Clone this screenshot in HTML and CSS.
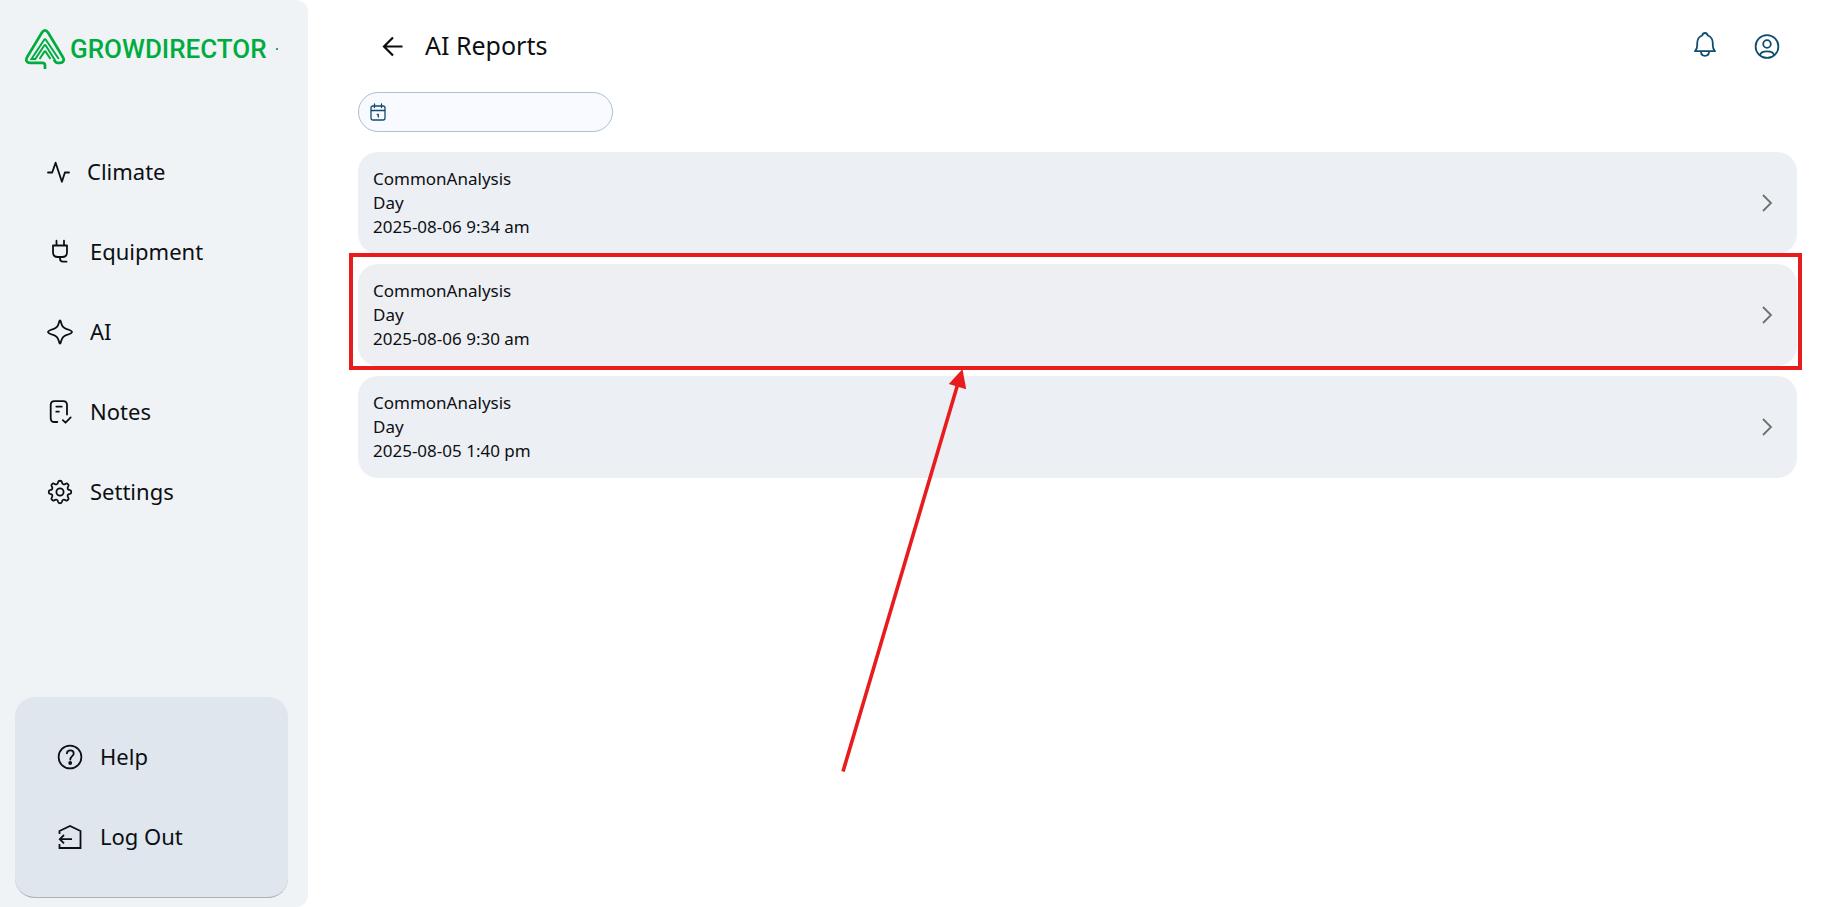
FILE: index.html
```html
<!DOCTYPE html>
<html lang="en">
<head>
<meta charset="utf-8">
<title>AI Reports</title>
<link rel="stylesheet" href="styles.css">
</head>
<body>
<div class="app">
  <aside class="sidebar">
    <a class="logo" href="#">
      <svg class="logo-mark" width="40" height="42" viewBox="0 0 40 42" fill="none" stroke="#00ac3e">
        <path stroke-width="2.700" d="M20 41V37.500q0-2.700-2.700-2.700H5C1.500 34.800.400 31.800 2.200 29L16.800 4.700Q20-.100 23.200 4.700L37.800 29C39.600 31.800 38.500 34.800 35 34.800H32.500Q31 34.800 30.200 33.500L29 31.600"/>
        <path stroke-width="2" d="M11 31H6.500L19 12Q20 10.600 21 12L33.800 31M10.300 31 19.100 17.700Q20 16.400 20.900 17.700L29.800 32M14.600 31 19.200 23.900Q20 22.700 20.800 23.900L25.500 31"/>
      </svg>
      <span class="logo-name">GROWDIRECTOR</span>
      <span class="logo-dot"></span>
    </a>
    <nav class="nav">
      <a class="nav-item nav-item-tight" href="#">
        <svg class="icon" width="24" height="24" viewBox="0 0 24 24"><path d="M1 12.500h4.200L8.600 2.700l6.300 19.100 3-9.300H22"/></svg>
        <span class="nav-label">Climate</span>
      </a>
      <a class="nav-item" href="#">
        <svg class="icon" width="26" height="26" viewBox="0 0 26 26"><path d="M6 6.500h14v6.500c0 3-1.800 5-4.500 5h-5C7.800 18 6 16 6 13zM9.500 6.500V1.700M17 6.500V1.700M13 18v1.500c0 2 1 3.200 3 3.200h3.500"/></svg>
        <span class="nav-label">Equipment</span>
      </a>
      <a class="nav-item" href="#">
        <svg class="icon" width="26" height="26" viewBox="0 0 26 26"><path d="M13 1.300c.700 0 .700 1 1 2.100 1.200 4.200 2.200 5.500 6.500 6.900 2.500.900 4.500 1.500 4.500 2.700s-2 1.800-4.500 2.700c-4.300 1.400-5.300 2.700-6.500 6.900-.300 1.100-.300 2.100-1 2.100s-.700-1-1-2.100c-1.200-4.200-2.200-5.500-6.500-6.900C3 14.800 1 14.200 1 13s2-1.800 4.500-2.700c4.300-1.400 5.300-2.700 6.500-6.900.300-1.100.300-2.100 1-2.100z"/></svg>
        <span class="nav-label">AI</span>
      </a>
      <a class="nav-item" href="#">
        <svg class="icon" width="26" height="26" viewBox="0 0 26 26"><path d="M10.300 23H7.500C5 23 3.700 21.700 3.700 19.200V6C3.700 3.500 5 2.200 7.500 2.200h8.700C18.700 2.200 20 3.500 20 6v9.500M9.300 7.600h5.500M9.300 12.700h2.500M15.800 21.200l2.700 2.500 5.200-5.300"/></svg>
        <span class="nav-label">Notes</span>
      </a>
      <a class="nav-item" href="#">
        <svg class="icon" width="26" height="26" viewBox="0 0 26 26"><circle cx="13" cy="13" r="3.600"/><path d="M11.100 3.100C11.400 1.300 14.600 1.300 14.900 3.100C15.200 5.400 16.800 6.100 18.700 4.700C20.200 3.600 22.400 5.800 21.300 7.300C19.900 9.200 20.600 10.800 22.900 11.100C24.700 11.400 24.700 14.600 22.900 14.900C20.600 15.200 19.900 16.800 21.300 18.700C22.400 20.200 20.200 22.400 18.700 21.300C16.800 19.900 15.200 20.600 14.900 22.900C14.600 24.700 11.400 24.700 11.100 22.900C10.800 20.600 9.200 19.900 7.300 21.300C5.800 22.400 3.600 20.200 4.700 18.700C6.100 16.800 5.400 15.200 3.100 14.900C1.300 14.600 1.300 11.400 3.100 11.100C5.400 10.800 6.100 9.200 4.700 7.300C3.600 5.800 5.800 3.600 7.300 4.700C9.200 6.100 10.800 5.400 11.100 3.100Z"/></svg>
        <span class="nav-label">Settings</span>
      </a>
    </nav>
    <div class="support">
      <a class="nav-item" href="#">
        <svg class="icon" width="26" height="26" viewBox="0 0 26 26"><circle cx="13" cy="13" r="11.400"/><path d="M9.900 9.300c.2-1.800 1.500-2.900 3.400-2.900 2 0 3.400 1.200 3.400 3 0 2.600-3.400 3-3.400 6.200"/><circle class="solid" cx="13.200" cy="19" r="1"/></svg>
        <span class="nav-label">Help</span>
      </a>
      <a class="nav-item" href="#">
        <svg class="icon icon-square" width="26" height="26" viewBox="0 0 26 26"><path d="M2.500 10V7L13 2l10.500 5v17h-21v-4M15 15.200H3M7 11l-4.200 4.200L7 19.400"/></svg>
        <span class="nav-label">Log Out</span>
      </a>
    </div>
  </aside>

  <main class="main">
    <header class="topbar">
      <button class="icon-button" type="button" aria-label="Back">
        <svg class="icon back" width="24" height="24" viewBox="0 0 24 24"><path d="M21.500 12.500H3M12 3.500l-9 9 9 9"/></svg>
      </button>
      <h1 class="title">AI Reports</h1>
      <div class="actions">
        <button class="icon-button" type="button" aria-label="Notifications">
          <svg class="icon accent" width="24" height="28" viewBox="0 0 24 28"><path d="M2 19.200c1.700-1.500 2.200-3 2.200-5.700v-2.300c0-3.700 2-6.500 5-7.700C9.600 2 10.500 1 12 1s2.400 1 2.800 2.500c3 1.200 5 4 5 7.700v2.300c0 2.700.500 4.200 2.200 5.700zM8 19.500c0 2.600 1.500 4.300 4 4.300s4-1.700 4-4.300"/></svg>
        </button>
        <button class="icon-button" type="button" aria-label="Account">
          <svg class="icon accent" width="26" height="26" viewBox="0 0 26 26"><circle cx="13" cy="13.500" r="11.400"/><circle cx="13" cy="11" r="3.800"/><path d="M6 22c.500-2.500 3-3.700 7-3.700s6.500 1.200 7 3.700"/></svg>
        </button>
      </div>
    </header>

    <label class="date-field">
      <svg class="icon calendar" width="16" height="18" viewBox="0 0 16 18"><path d="M3 3h10c1.300 0 2 .700 2 2v10c0 1.300-.700 2-2 2H3c-1.300 0-2-.700-2-2V5c0-1.300.700-2 2-2zM1 7.500h14M4.500 1v3.500M11.500 1v3.500M7.300 11.500h1v2.500"/></svg>
      <input class="date-input" type="text" aria-label="Date">
    </label>

    <ul class="reports">
      <li class="report">
        <a class="report-link" href="#">
          <span class="report-text"><span>CommonAnalysis</span><span>Day</span><span>2025-08-06 9:34 am</span></span>
          <svg class="chevron" width="10" height="18" viewBox="0 0 10 18"><path d="M1 1l8 8-8 8"/></svg>
        </a>
      </li>
      <li class="report report-marked">
        <a class="report-link" href="#">
          <span class="report-text"><span>CommonAnalysis</span><span>Day</span><span>2025-08-06 9:30 am</span></span>
          <svg class="chevron" width="10" height="18" viewBox="0 0 10 18"><path d="M1 1l8 8-8 8"/></svg>
        </a>
        <span class="marker"></span>
        <svg class="pointer" width="126" height="404" viewBox="0 0 126 404"><path d="M2 402.500 116.500 16" fill="none" stroke="#e81c1c" stroke-width="3.600"/><path d="M121.500 0 125.200 20.200 107.800 15z" fill="#e81c1c"/></svg>
      </li>
      <li class="report">
        <a class="report-link" href="#">
          <span class="report-text"><span>CommonAnalysis</span><span>Day</span><span>2025-08-05 1:40 pm</span></span>
          <svg class="chevron" width="10" height="18" viewBox="0 0 10 18"><path d="M1 1l8 8-8 8"/></svg>
        </a>
      </li>
    </ul>
  </main>
</div>
</body>
</html>
```
FILE: styles.css
```css
* {
  box-sizing: border-box;
}

body {
  margin: 0;
  background: #fff;
  color: #0c0f12;
  font-family: "Noto Sans", sans-serif;
}

a {
  color: inherit;
  text-decoration: none;
}

.app {
  display: flex;
  min-height: 100vh;
}

.sidebar {
  display: flex;
  flex-direction: column;
  flex: none;
  width: 308px;
  padding: 28px 20px 9px 15px;
  background: #eff3f6;
  border-radius: 0 12px 12px 0;
}

.logo {
  display: flex;
  align-items: center;
  gap: 5px;
  height: 42px;
  padding-left: 10px;
}

.logo-name {
  color: #00ac3e;
  font: 500 26px/40px Roboto, sans-serif;
}

.logo-dot {
  width: 2px;
  height: 2px;
  margin-left: 4px;
  background: #2f9d86;
}

.nav {
  padding: 62px 0 0 32px;
}

.nav-item {
  display: flex;
  align-items: center;
  gap: 17px;
  height: 80px;
  font-size: 22px;
  line-height: 32px;
}

.nav-item-tight {
  gap: 16px;
}

.nav-label {
  padding-bottom: 2px;
}

.support {
  margin-top: auto;
  padding: 20px 0 20px 42px;
  background: #dfe6ed;
  border-bottom: 1px solid #aab2ba;
  border-radius: 20px;
}

.icon {
  flex: none;
  fill: none;
  stroke: #0c0f12;
  stroke-width: 1.8;
  stroke-linecap: round;
  stroke-linejoin: round;
}

.icon-square {
  stroke-linecap: butt;
  stroke-linejoin: miter;
}

.solid {
  fill: #0c0f12;
}

.back {
  stroke-width: 2.2;
  stroke-linecap: butt;
  stroke-linejoin: miter;
}

.accent {
  stroke: #0f4c6e;
}

.main {
  flex: 1;
  min-width: 0;
  padding: 20px 43px 20px 50px;
}

.topbar {
  display: flex;
  align-items: center;
  height: 52px;
  padding: 0 17px 0 23px;
}

.icon-button {
  display: flex;
  padding: 0;
  border: 0;
  background: none;
}

.title {
  margin: 0 0 0 20px;
  padding-bottom: 2px;
  font-size: 25px;
  font-weight: 400;
  line-height: 34px;
}

.actions {
  display: flex;
  align-items: center;
  gap: 37px;
  margin-left: auto;
}

.date-field {
  display: flex;
  align-items: center;
  gap: 10px;
  width: 255px;
  height: 40px;
  margin-top: 20px;
  padding: 0 11px;
  background: #f8faff;
  border: 1px solid #adbfd0;
  border-radius: 20px;
}

.calendar {
  stroke: #0f4c6e;
  stroke-width: 1.3;
}

.date-input {
  flex: 1;
  min-width: 0;
  border: 0;
  outline: 0;
  background: none;
  font: inherit;
}

.reports {
  display: flex;
  flex-direction: column;
  gap: 10px;
  margin: 20px 0 0;
  padding: 0;
  list-style: none;
}

.report {
  position: relative;
}

.report-link {
  display: flex;
  align-items: center;
  justify-content: space-between;
  padding: 15px 25px 15px 15px;
  background: #ecf0f5;
  border-radius: 20px;
}

.report-marked .report-link {
  background: #eeeff3;
}

.report-text {
  display: flex;
  flex-direction: column;
  font-size: 17px;
  line-height: 24px;
}

.chevron {
  fill: none;
  stroke: #6f6f6f;
  stroke-width: 1.8;
}

.marker {
  position: absolute;
  inset: -11px -5px -4px -9px;
  border: 4px solid #e81c1c;
  pointer-events: none;
}

.report-marked {
  z-index: 1;
}

.pointer {
  position: absolute;
  top: 105px;
  left: 483px;
  pointer-events: none;
}
```
